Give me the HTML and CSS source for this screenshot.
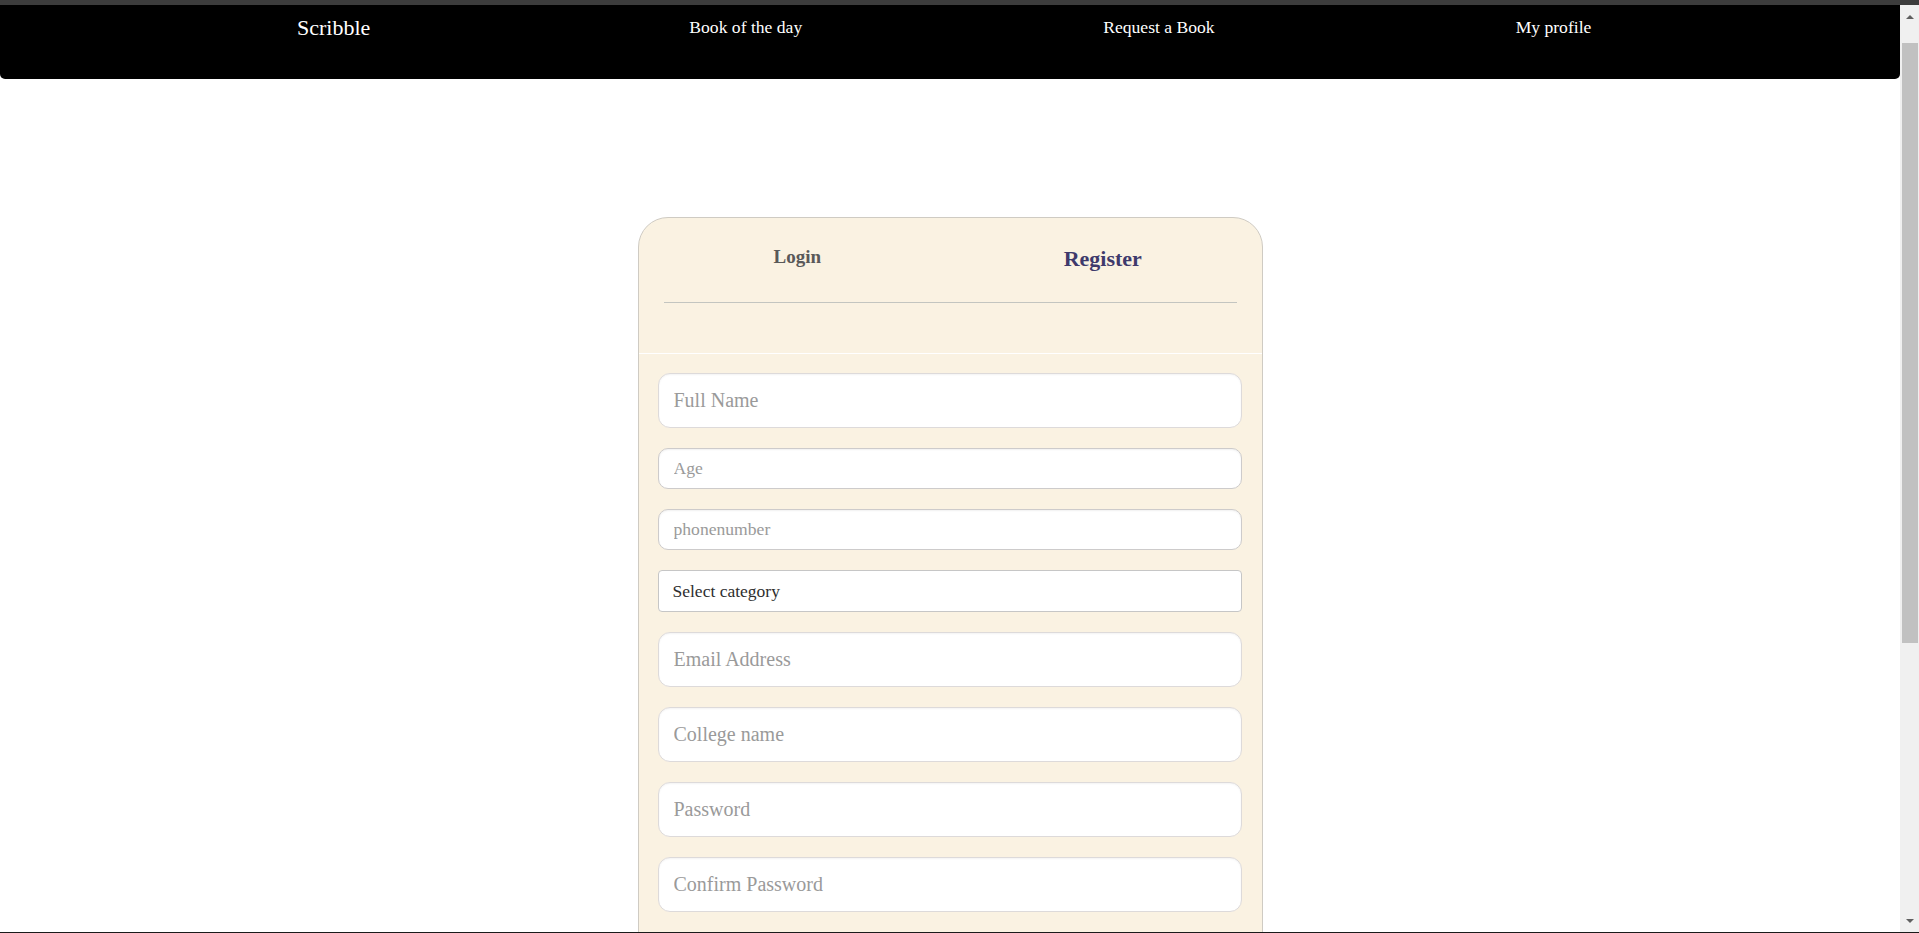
FILE: index.html
```html
<!DOCTYPE html>
<html lang="en">
<head>
<meta charset="utf-8">
<title>Scribble - Register</title>
<link rel="stylesheet" href="styles.css">
</head>
<body>
<div class="top-strip"></div>
<div class="viewport">
  <nav class="navbar">
    <a class="brand" href="#">Scribble</a>
    <ul class="nav-links">
      <li><a href="#">Book of the day</a></li>
      <li><a href="#">Request a Book</a></li>
      <li><a href="#">My profile</a></li>
    </ul>
  </nav>
  <main class="page">
    <section class="auth-card">
      <div class="auth-head">
        <div class="tabs">
          <button class="tab tab-login" type="button">Login</button>
          <button class="tab tab-register" type="button">Register</button>
        </div>
        <hr class="tab-rule">
      </div>
      <form class="auth-form">
        <input class="field field-lg" type="text" placeholder="Full Name">
        <input class="field field-sm" type="text" placeholder="Age">
        <input class="field field-sm" type="text" placeholder="phonenumber">
        <select class="field field-select">
          <option>Select category</option>
        </select>
        <input class="field field-lg" type="email" placeholder="Email Address">
        <input class="field field-lg" type="text" placeholder="College name">
        <input class="field field-lg" type="password" placeholder="Password">
        <input class="field field-lg" type="password" placeholder="Confirm Password">
      </form>
    </section>
  </main>
</div>
<div class="scrollbar" aria-hidden="true">
  <span class="scroll-arrow scroll-up"></span>
  <span class="scroll-thumb"></span>
  <span class="scroll-arrow scroll-down"></span>
</div>
<div class="bottom-edge" aria-hidden="true"></div>
</body>
</html>
```
FILE: styles.css
```css
html, body {
  margin: 0;
  padding: 0;
}

body {
  background: #ffffff;
  font-family: "Liberation Serif", "Times New Roman", serif;
  color: #222;
}

.top-strip {
  height: 5px;
  background: #3c3c3c;
}

.viewport {
  margin-right: 19px;
}

.navbar {
  display: flex;
  align-items: center;
  align-content: flex-start;
  gap: 301px;
  height: 74px;
  box-sizing: border-box;
  padding: 10px 0 0 297px;
  background: #000;
  border-radius: 0 0 5px 5px;
}

.navbar a {
  color: #fff;
  text-decoration: none;
}

.brand {
  align-self: flex-start;
  font-size: 22px;
  margin-right: 18px;
}

.nav-links {
  display: flex;
  align-items: baseline;
  align-self: flex-start;
  gap: 301px;
  list-style: none;
  margin: 2px 0 0;
  padding: 0;
  font-size: 17.6px;
}

.page {
  padding: 138px 0 200px;
}

.auth-card {
  width: 625px;
  margin: 0 auto;
  box-sizing: border-box;
  border: 1px solid #cfcbc3;
  border-radius: 30px;
  background: #faf2e2;
}

.auth-head {
  padding: 28px 25px 50px;
  border-bottom: 1px solid #ffffff;
}

.tabs {
  display: flex;
  align-items: flex-start;
  margin: 0 -19px;
}

.tab {
  flex: 1;
  background: none;
  border: 0;
  padding: 0;
  margin: 0;
  font-family: inherit;
  font-weight: bold;
  line-height: normal;
  text-align: center;
  cursor: pointer;
}

.tab-login {
  font-size: 19px;
  color: #595959;
}

.tab-register {
  font-size: 22px;
  color: #3e3a6c;
}

.tab-rule {
  margin: 30px 0 0;
  border: 0;
  border-top: 1px solid #c3c5c0;
  height: 0;
}

.auth-form {
  display: flex;
  flex-direction: column;
  gap: 20px;
  padding: 19px 20px 160px 19px;
}

.field {
  display: block;
  width: 100%;
  box-sizing: border-box;
  margin: 0;
  background: #fff;
  font-family: "Liberation Serif", "Times New Roman", serif;
  color: #333;
  outline: none;
}

.field::placeholder {
  color: #9a9a9a;
  opacity: 1;
}

.field-lg {
  height: 55px;
  padding: 0 15px;
  font-size: 20px;
  border: 1px solid #dddada;
  border-radius: 12px;
  box-shadow: inset 0 1px 2px rgba(0, 0, 0, 0.05);
}

.field-sm {
  height: 41px;
  padding: 0 15px;
  font-size: 17.6px;
  border: 1px solid #cdcbcb;
  border-radius: 10px;
  box-shadow: inset 0 1px 2px rgba(0, 0, 0, 0.06);
}

.field-select {
  height: 42px;
  padding: 0 0 0 14px;
  font-size: 17.5px;
  color: #2e2e2e;
  border: 1px solid #c6c6c6;
  border-radius: 4px;
  -webkit-appearance: none;
  appearance: none;
}

/* imitation of the window's classic scrollbar */
.scrollbar {
  position: fixed;
  top: 5px;
  right: 0;
  bottom: 0;
  width: 19px;
  background: #f0f0f0;
}

.scroll-thumb {
  position: absolute;
  top: 38px;
  left: 2px;
  right: 1px;
  height: 600px;
  background: #c1c1c1;
}

.scroll-arrow {
  position: absolute;
  left: 6px;
  width: 0;
  height: 0;
  border-left: 4px solid transparent;
  border-right: 4px solid transparent;
}

.scroll-up {
  top: 10px;
  border-bottom: 4px solid #606060;
}

.scroll-down {
  bottom: 10px;
  border-top: 4px solid #606060;
}

.bottom-edge {
  position: fixed;
  left: 0;
  right: 0;
  bottom: 0;
  height: 1px;
  background: #1a1a1a;
}
```
